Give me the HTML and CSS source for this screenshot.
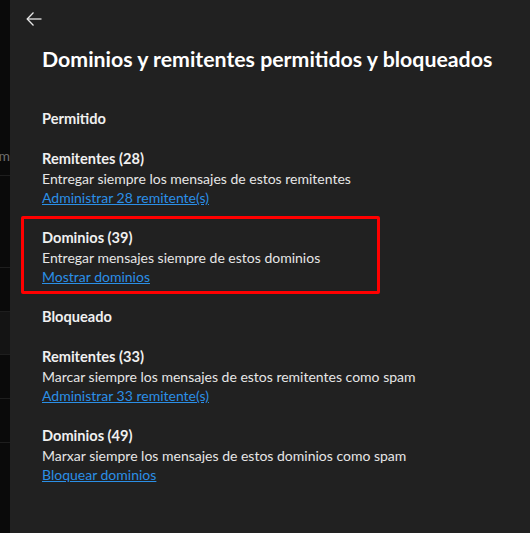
FILE: index.html
```html
<!DOCTYPE html>
<html lang="es">
<head>
    <meta charset="UTF-8">
    <meta name="viewport" content="width=device-width, initial-scale=1.0">
    <title>Dominios y remitentes</title>
    <link rel="stylesheet" href="styles.css">
</head>
<body>

    <div class="side-list">
        <div class="side-row side-row-top"><span class="side-text">rm</span></div>
        <div class="side-row side-row-tall"></div>
        <div class="side-row"></div>
        <div class="side-row side-row-active"></div>
        <div class="side-row"></div>
        <div class="side-row"></div>
    </div>

    <div class="panel">
        <button class="back-button" aria-label="Volver">
            <svg width="16" height="16" viewBox="0 0 16 16" fill="none" stroke="#e6e6e6" stroke-width="1.3">
                <path d="M15.5 8H1.2"/>
                <path d="M7.5 1.5L1.2 8l6.3 6.5"/>
            </svg>
        </button>

        <h1 class="panel-title">Dominios y remitentes permitidos y bloqueados</h1>

        <div class="section">
            <h2 class="section-label">Permitido</h2>

            <div class="group">
                <h3>Remitentes (28)</h3>
                <p>Entregar siempre los mensajes de estos remitentes</p>
                <a href="#">Administrar 28 remitente(s)</a>
            </div>

            <div class="group highlight">
                <h3>Dominios (39)</h3>
                <p>Entregar mensajes siempre de estos dominios</p>
                <a href="#">Mostrar dominios</a>
            </div>

            <h2 class="section-label">Bloqueado</h2>

            <div class="group">
                <h3>Remitentes (33)</h3>
                <p>Marcar siempre los mensajes de estos remitentes como spam</p>
                <a href="#">Administrar 33 remitente(s)</a>
            </div>

            <div class="group">
                <h3>Dominios (49)</h3>
                <p>Marxar siempre los mensajes de estos dominios como spam</p>
                <a href="#">Bloquear dominios</a>
            </div>
        </div>
    </div>

</body>
</html>
```

FILE: styles.css
```css
html, body {
    height: 100%;
}

body {
    font-family: 'Lato', 'Noto Sans', sans-serif;
    margin: 0;
    padding: 0;
    display: flex;
    background-color: #0a0a0a;
    color: #e6e6e6;
    overflow: hidden;
}

/* list behind the panel */
.side-list {
    width: 10px;
    flex-shrink: 0;
    display: flex;
    flex-direction: column;
    background-color: #0a0a0a;
}

.side-row {
    height: 43px;
    border-bottom: 1px solid #1e1e1e;
}

.side-row-top {
    height: 175px;
    position: relative;
}

.side-text {
    position: absolute;
    top: 147px;
    right: 0;
    font-size: 14px;
    color: #6e6e6e;
}

.side-row-tall {
    height: 91px;
}

.side-row-active {
    height: 42px;
    background-color: #141414;
}

.panel {
    flex: 1;
    background-color: #212121;
    padding: 0 32px;
}

.back-button {
    display: block;
    background: none;
    border: none;
    padding: 0;
    margin: 11px 0 0 -16px;
    width: 16px;
    height: 16px;
    cursor: pointer;
}

.back-button svg {
    display: block;
}

.panel-title {
    font-size: 21.3px;
    font-weight: 700;
    line-height: 28px;
    color: #ffffff;
    margin: 18px 0 0 0;
}

.section {
    display: flex;
    flex-direction: column;
    gap: 20.5px;
    margin-top: 36px;
}

.section-label {
    font-size: 14.6px;
    font-weight: 700;
    line-height: 19.5px;
    color: #f0f0f0;
    margin: 0;
}

.group {
    display: flex;
    flex-direction: column;
    align-items: flex-start;
    font-size: 14px;
    line-height: 19.5px;
}

.group h3 {
    font-size: 14.6px;
    font-weight: 700;
    margin: 0;
    color: #f0f0f0;
}

.group p {
    margin: 0;
    color: #e6e6e6;
}

.group a {
    color: #2b8fe6;
    text-decoration: underline;
}

.highlight {
    position: relative;
}

.highlight::after {
    content: "";
    position: absolute;
    left: -21px;
    top: -12px;
    width: 353px;
    height: 72px;
    border: 3px solid #ff0000;
    border-radius: 2px;
}
```
